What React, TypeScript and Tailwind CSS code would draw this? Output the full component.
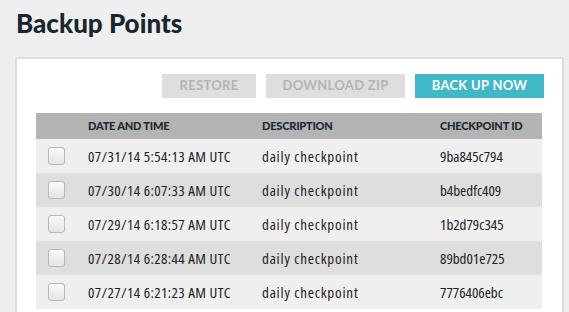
import React from "react";

const rows = [
  ["07/31/14 5:54:13 AM UTC", "daily checkpoint", "9ba845c794"],
  ["07/30/14 6:07:33 AM UTC", "daily checkpoint", "b4bedfc409"],
  ["07/29/14 6:18:57 AM UTC", "daily checkpoint", "1b2d79c345"],
  ["07/28/14 6:28:44 AM UTC", "daily checkpoint", "89bd01e725"],
  ["07/27/14 6:21:23 AM UTC", "daily checkpoint", "7776406ebc"],
];

export default function App() {
  return (
    <div className="w-[569px] h-[312px] overflow-hidden bg-[#efefef] font-['Lato',sans-serif]">
      <h1 className="pl-[16px] pt-[7px] h-[57px] text-[26px] leading-[32px] font-black text-[#17262f]">
        Backup Points
      </h1>
      <div className="ml-[15px] w-[549px] h-[300px] bg-white border-2 border-b-0 border-[#dedede] pt-[15px] pl-[19px] pr-[18px]">
        <div className="flex justify-end gap-[10px] text-[13px] font-bold tracking-[0.3px]">
          <div className="w-[94px] h-[24px] flex items-center justify-center bg-[#dedede] text-[#b4b4b4]">
            RESTORE
          </div>
          <div className="w-[139px] h-[24px] flex items-center justify-center bg-[#dedede] text-[#b4b4b4]">
            DOWNLOAD ZIP
          </div>
          <div className="w-[129px] h-[24px] flex items-center justify-center bg-[#40b8c8] text-white">
            BACK UP NOW
          </div>
        </div>
        <div className="mt-[15px] mr-[2px]">
          <div className="grid grid-cols-[52px_174px_178px_1fr] h-[26px] items-center bg-[#b4b4b4] text-[11px] font-black text-[#1a2933] tracking-[-0.2px]">
            <div />
            <div>DATE AND TIME</div>
            <div>DESCRIPTION</div>
            <div>CHECKPOINT ID</div>
          </div>
          {rows.map((r, i) => (
            <div
              key={i}
              className={`grid grid-cols-[52px_174px_178px_1fr] h-[34px] items-center font-['Open_Sans',sans-serif] font-stretch-condensed text-[15px] text-[#222222] ${
                i % 2 === 0 ? "bg-[#efefef]" : "bg-[#dedede]"
              }`}
            >
              <div className="pl-[12px] flex items-center">
                <div className="w-[17px] h-[18px] rounded-[3px] border border-[#b9b9b9] bg-gradient-to-b from-[#fafafa] to-[#e4e4e4]" />
              </div>
              <div className="tracking-[0.4px]">{r[0]}</div>
              <div className="tracking-[0.8px]">{r[1]}</div>
              <div>{r[2]}</div>
            </div>
          ))}
        </div>
      </div>
    </div>
  );
}
